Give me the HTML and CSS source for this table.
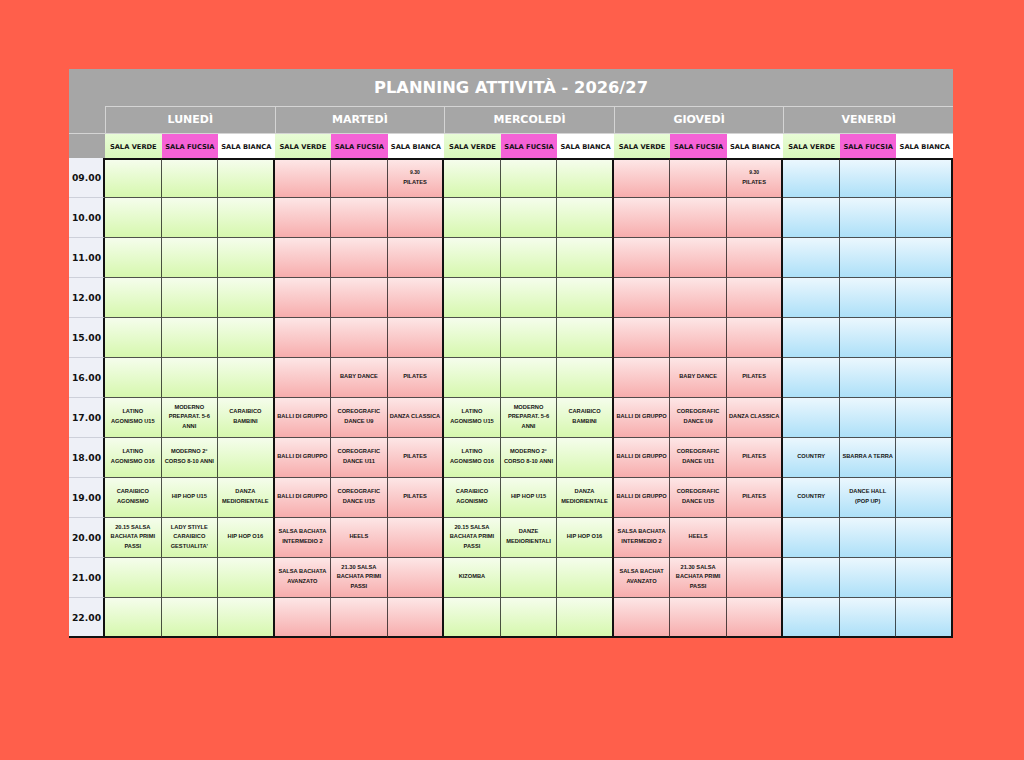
FILE: index.html
```html
<!DOCTYPE html>
<html lang="it">
<head>
<meta charset="utf-8">
<title>Planning attività 2026/27</title>
<link rel="stylesheet" href="styles.css">
</head>
<body>
<div class="sheet">
  <div class="title">PLANNING ATTIVITÀ - 2026/27</div>

  <div class="corner corner-day"></div>
  <div class="day">LUNEDÌ</div>
  <div class="day">MARTEDÌ</div>
  <div class="day">MERCOLEDÌ</div>
  <div class="day">GIOVEDÌ</div>
  <div class="day">VENERDÌ</div>

  <div class="corner corner-sala"></div>
  <div class="sala verde">SALA VERDE</div><div class="sala fucsia">SALA FUCSIA</div><div class="sala bianca">SALA BIANCA</div>
  <div class="sala verde">SALA VERDE</div><div class="sala fucsia">SALA FUCSIA</div><div class="sala bianca">SALA BIANCA</div>
  <div class="sala verde">SALA VERDE</div><div class="sala fucsia">SALA FUCSIA</div><div class="sala bianca">SALA BIANCA</div>
  <div class="sala verde">SALA VERDE</div><div class="sala fucsia">SALA FUCSIA</div><div class="sala bianca">SALA BIANCA</div>
  <div class="sala verde">SALA VERDE</div><div class="sala fucsia">SALA FUCSIA</div><div class="sala bianca">SALA BIANCA</div>

  <div class="row first">
    <div class="time">09.00</div>
    <div class="c"></div><div class="c"></div><div class="c"></div>
    <div class="c"></div><div class="c"></div><div class="c"><span><small>9.30</small><br>PILATES</span></div>
    <div class="c"></div><div class="c"></div><div class="c"></div>
    <div class="c"></div><div class="c"></div><div class="c"><span><small>9.30</small><br>PILATES</span></div>
    <div class="c"></div><div class="c"></div><div class="c"></div>
  </div>

  <div class="row">
    <div class="time">10.00</div>
    <div class="c"></div><div class="c"></div><div class="c"></div>
    <div class="c"></div><div class="c"></div><div class="c"></div>
    <div class="c"></div><div class="c"></div><div class="c"></div>
    <div class="c"></div><div class="c"></div><div class="c"></div>
    <div class="c"></div><div class="c"></div><div class="c"></div>
  </div>

  <div class="row">
    <div class="time">11.00</div>
    <div class="c"></div><div class="c"></div><div class="c"></div>
    <div class="c"></div><div class="c"></div><div class="c"></div>
    <div class="c"></div><div class="c"></div><div class="c"></div>
    <div class="c"></div><div class="c"></div><div class="c"></div>
    <div class="c"></div><div class="c"></div><div class="c"></div>
  </div>

  <div class="row">
    <div class="time">12.00</div>
    <div class="c"></div><div class="c"></div><div class="c"></div>
    <div class="c"></div><div class="c"></div><div class="c"></div>
    <div class="c"></div><div class="c"></div><div class="c"></div>
    <div class="c"></div><div class="c"></div><div class="c"></div>
    <div class="c"></div><div class="c"></div><div class="c"></div>
  </div>

  <div class="row">
    <div class="time">15.00</div>
    <div class="c"></div><div class="c"></div><div class="c"></div>
    <div class="c"></div><div class="c"></div><div class="c"></div>
    <div class="c"></div><div class="c"></div><div class="c"></div>
    <div class="c"></div><div class="c"></div><div class="c"></div>
    <div class="c"></div><div class="c"></div><div class="c"></div>
  </div>

  <div class="row">
    <div class="time">16.00</div>
    <div class="c"></div><div class="c"></div><div class="c"></div>
    <div class="c"></div><div class="c"><span>BABY DANCE</span></div><div class="c"><span>PILATES</span></div>
    <div class="c"></div><div class="c"></div><div class="c"></div>
    <div class="c"></div><div class="c"><span>BABY DANCE</span></div><div class="c"><span>PILATES</span></div>
    <div class="c"></div><div class="c"></div><div class="c"></div>
  </div>

  <div class="row">
    <div class="time">17.00</div>
    <div class="c"><span>LATINO<br>AGONISMO U15</span></div><div class="c"><span>MODERNO<br>PREPARAT. 5-6<br>ANNI</span></div><div class="c"><span>CARAIBICO<br>BAMBINI</span></div>
    <div class="c"><span>BALLI DI GRUPPO</span></div><div class="c"><span>COREOGRAFIC<br>DANCE U9</span></div><div class="c"><span>DANZA CLASSICA</span></div>
    <div class="c"><span>LATINO<br>AGONISMO U15</span></div><div class="c"><span>MODERNO<br>PREPARAT. 5-6<br>ANNI</span></div><div class="c"><span>CARAIBICO<br>BAMBINI</span></div>
    <div class="c"><span>BALLI DI GRUPPO</span></div><div class="c"><span>COREOGRAFIC<br>DANCE U9</span></div><div class="c"><span>DANZA CLASSICA</span></div>
    <div class="c"></div><div class="c"></div><div class="c"></div>
  </div>

  <div class="row">
    <div class="time">18.00</div>
    <div class="c"><span>LATINO<br>AGONISMO O16</span></div><div class="c"><span>MODERNO 2°<br>CORSO 8-10 ANNI</span></div><div class="c"></div>
    <div class="c"><span>BALLI DI GRUPPO</span></div><div class="c"><span>COREOGRAFIC<br>DANCE U11</span></div><div class="c"><span>PILATES</span></div>
    <div class="c"><span>LATINO<br>AGONISMO O16</span></div><div class="c"><span>MODERNO 2°<br>CORSO 8-10 ANNI</span></div><div class="c"></div>
    <div class="c"><span>BALLI DI GRUPPO</span></div><div class="c"><span>COREOGRAFIC<br>DANCE U11</span></div><div class="c"><span>PILATES</span></div>
    <div class="c"><span>COUNTRY</span></div><div class="c"><span>SBARRA A TERRA</span></div><div class="c"></div>
  </div>

  <div class="row">
    <div class="time">19.00</div>
    <div class="c"><span>CARAIBICO<br>AGONISMO</span></div><div class="c"><span>HIP HOP U15</span></div><div class="c"><span>DANZA<br>MEDIORIENTALE</span></div>
    <div class="c"><span>BALLI DI GRUPPO</span></div><div class="c"><span>COREOGRAFIC<br>DANCE U15</span></div><div class="c"><span>PILATES</span></div>
    <div class="c"><span>CARAIBICO<br>AGONISMO</span></div><div class="c"><span>HIP HOP U15</span></div><div class="c"><span>DANZA<br>MEDIORIENTALE</span></div>
    <div class="c"><span>BALLI DI GRUPPO</span></div><div class="c"><span>COREOGRAFIC<br>DANCE U15</span></div><div class="c"><span>PILATES</span></div>
    <div class="c"><span>COUNTRY</span></div><div class="c"><span>DANCE HALL<br>(POP UP)</span></div><div class="c"></div>
  </div>

  <div class="row">
    <div class="time">20.00</div>
    <div class="c"><span>20.15 SALSA<br>BACHATA PRIMI<br>PASSI</span></div><div class="c"><span>LADY STIYLE<br>CARAIBICO<br>GESTUALITA'</span></div><div class="c"><span>HIP HOP O16</span></div>
    <div class="c"><span>SALSA BACHATA<br>INTERMEDIO 2</span></div><div class="c"><span>HEELS</span></div><div class="c"></div>
    <div class="c"><span>20.15 SALSA<br>BACHATA PRIMI<br>PASSI</span></div><div class="c"><span>DANZE<br>MEDIORIENTALI</span></div><div class="c"><span>HIP HOP O16</span></div>
    <div class="c"><span>SALSA BACHATA<br>INTERMEDIO 2</span></div><div class="c"><span>HEELS</span></div><div class="c"></div>
    <div class="c"></div><div class="c"></div><div class="c"></div>
  </div>

  <div class="row">
    <div class="time">21.00</div>
    <div class="c"></div><div class="c"></div><div class="c"></div>
    <div class="c"><span>SALSA BACHATA<br>AVANZATO</span></div><div class="c"><span>21.30 SALSA<br>BACHATA PRIMI<br>PASSI</span></div><div class="c"></div>
    <div class="c"><span>KIZOMBA</span></div><div class="c"></div><div class="c"></div>
    <div class="c"><span>SALSA BACHAT<br>AVANZATO</span></div><div class="c"><span>21.30 SALSA<br>BACHATA PRIMI<br>PASSI</span></div><div class="c"></div>
    <div class="c"></div><div class="c"></div><div class="c"></div>
  </div>

  <div class="row last">
    <div class="time">22.00</div>
    <div class="c"></div><div class="c"></div><div class="c"></div>
    <div class="c"></div><div class="c"></div><div class="c"></div>
    <div class="c"></div><div class="c"></div><div class="c"></div>
    <div class="c"></div><div class="c"></div><div class="c"></div>
    <div class="c"></div><div class="c"></div><div class="c"></div>
  </div>
</div>
</body>
</html>
```

FILE: styles.css
```css
html, body {
  margin: 0;
  padding: 0;
  background: #ff5f4b;
}

.sheet {
  margin: 69px 0 0 69px;
  width: 884px;
  display: grid;
  grid-template-columns: 36px repeat(15, 1fr);
  grid-template-rows: 37px 27px 25px repeat(12, 40px);
  font-family: "DejaVu Sans", Verdana, sans-serif;
}

.sheet > div, .row > div {
  box-sizing: border-box;
  min-width: 0;
}

.title {
  grid-column: 1 / -1;
  background: #a6a6a6;
  color: #fff;
  font-weight: bold;
  font-size: 16.3px;
  display: flex;
  align-items: center;
  justify-content: center;
}

.corner {
  background: #a6a6a6;
}

.corner-sala {
  border-top: 1px solid #d4d4d4;
}

.day {
  grid-column: span 3;
  background: #a6a6a6;
  color: #fff;
  font-weight: bold;
  font-size: 11px;
  border-top: 1px solid #d4d4d4;
  border-left: 1px solid #d4d4d4;
  display: flex;
  align-items: center;
  justify-content: center;
  padding-bottom: 1px;
}

.sala {
  font-size: 6.7px;
  font-weight: bold;
  color: #111;
  border-top: 1px solid #d4d4d4;
  display: flex;
  align-items: center;
  justify-content: center;
  white-space: nowrap;
  padding-top: 1px;
}

.sala.verde {
  background: linear-gradient(#e8fcd6, #d9f8bc);
}

.sala.fucsia {
  background: #f562d6;
}

.sala.bianca {
  background: #ffffff;
}

.row {
  display: contents;
}

.time {
  background: #eef0f7;
  border-bottom: 1px solid #cdd0da;
  border-right: 2px solid #111;
  font-weight: bold;
  font-size: 9.2px;
  color: #111;
  display: flex;
  align-items: center;
  justify-content: center;
  padding-left: 1px;
}

.c {
  border-right: 1px solid rgba(0, 0, 0, 0.68);
  border-bottom: 1px solid rgba(0, 0, 0, 0.68);
  display: flex;
  align-items: center;
  justify-content: center;
  text-align: center;
  font-family: "Liberation Sans", Arial, sans-serif;
  font-weight: bold;
  font-size: 5.7px;
  line-height: 9.6px;
  color: #141414;
  padding: 0 1px 1px;
}

.c small {
  font-size: 5px;
}

/* day colours: Mon & Wed green, Tue & Thu pink, Fri blue */
.row > .c:nth-child(n+2):nth-child(-n+4),
.row > .c:nth-child(n+8):nth-child(-n+10) {
  background: linear-gradient(#f5fdec, #d6f8ae);
}

.row > .c:nth-child(n+5):nth-child(-n+7),
.row > .c:nth-child(n+11):nth-child(-n+13) {
  background: linear-gradient(#fde6e6, #f7adad);
}

.row > .c:nth-child(n+14) {
  background: linear-gradient(#ebf7fe, #ade0f8);
}

/* thick separators between days */
.row > .c:nth-child(3n+4) {
  border-right: 2px solid #111;
}

.row.first > .c {
  border-top: 2px solid #111;
}

.row.last > .c,
.row.last > .time {
  border-bottom: 2px solid #111;
}
```
